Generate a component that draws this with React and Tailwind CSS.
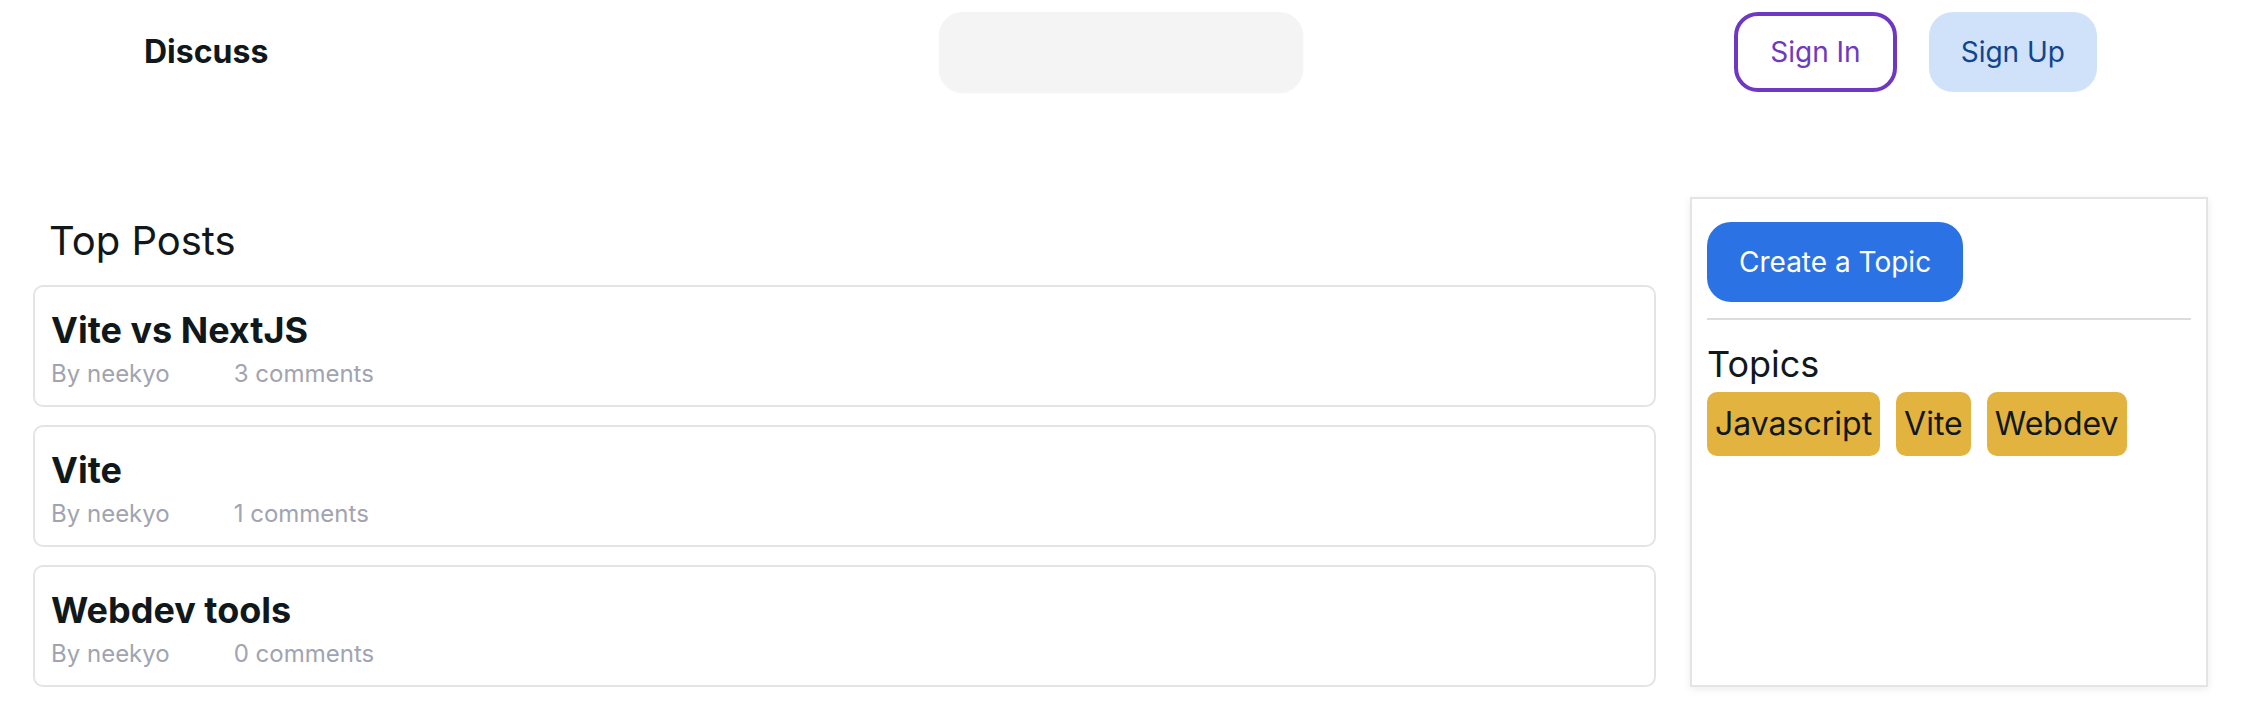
export default function App() {
  const posts = [
    { title: "Vite vs NextJS", author: "neekyo", comments: 3 },
    { title: "Vite", author: "neekyo", comments: 1 },
    { title: "Webdev tools", author: "neekyo", comments: 0 },
  ];
  const topics = ["Javascript", "Vite", "Webdev"];

  return (
    <div className="min-h-screen bg-white text-[#11181c] font-['Inter','Liberation_Sans',sans-serif]">
      {/* Navbar */}
      <nav className="h-[104px] pl-[144px] pr-[151px] grid grid-cols-[1fr_auto_1fr] items-center">
        <div className="text-[32px] leading-[48px] font-bold">Discuss</div>
        <div className="w-[364px] h-[80px] rounded-[24px] bg-[#f4f4f5] shadow-[0_1px_2px_rgba(0,0,0,0.06)]" />
        <div className="flex justify-end gap-[32px]">
          <button className="h-[80px] px-[32px] rounded-[24px] border-[4px] border-[#6f38c2] text-[#6f38c2] text-[28px] leading-[40px]">
            Sign In
          </button>
          <button className="h-[80px] px-[32px] rounded-[24px] bg-[#d0e2f9] text-[#12458e] text-[28px] leading-[40px]">
            Sign Up
          </button>
        </div>
      </nav>

      {/* Main */}
      <main className="mt-[93px] pl-[33px] pr-[40px] flex gap-[34px]">
        <div className="flex-1 flex flex-col">
          <h1 className="m-[16px] text-[40px] leading-[56px]">Top Posts</h1>
          <div className="flex flex-col gap-[18px]">
            {posts.map((post) => (
              <div
                key={post.title}
                className="border-2 border-[#e4e4e7] rounded-[10px] px-[16px] py-[15px]"
              >
                <h3 className="text-[36px] leading-[56px] font-bold">{post.title}</h3>
                <div className="flex gap-[64px] text-[24px] leading-[32px] text-[#a1a4b0]">
                  <span>By {post.author}</span>
                  <span>{post.comments} comments</span>
                </div>
              </div>
            ))}
          </div>
        </div>

        {/* Sidebar */}
        <aside className="w-[518px] border-2 border-[#e4e4e7] shadow-[0_2px_8px_rgba(0,0,0,0.08)] px-[15px] pt-[23px]">
          <button className="h-[80px] px-[32px] rounded-[24px] bg-[#2b73e4] text-white text-[28px] leading-[40px]">
            Create a Topic
          </button>
          <div className="my-[16px] h-[2px] bg-[#dcdce0]" />
          <h3 className="text-[36px] leading-[56px]">Topics</h3>
          <div className="flex gap-[16px]">
            {topics.map((t) => (
              <span
                key={t}
                className="px-[8px] py-[8px] rounded-[10px] bg-[#e2b33f] text-[32px] leading-[48px]"
              >
                {t}
              </span>
            ))}
          </div>
        </aside>
      </main>
    </div>
  );
}
